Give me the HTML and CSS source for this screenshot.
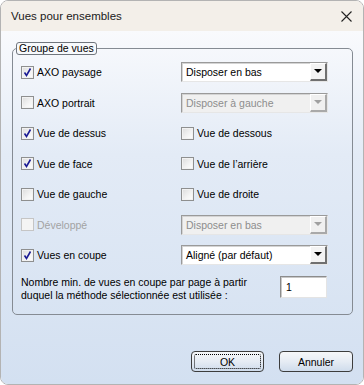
FILE: index.html
```html
<!DOCTYPE html>
<html lang="fr">
<head>
    <meta charset="UTF-8">
    <title>Vues pour ensembles</title>
    <link rel="stylesheet" href="styles.css">
</head>
<body>
    <div class="window">
        <div class="titlebar">
            <span class="title">Vues pour ensembles</span>
            <svg class="close" width="11" height="11" viewBox="0 0 11 11">
                <path d="M0.5 0.5 L10.5 10.5 M10.5 0.5 L0.5 10.5" stroke="#222" stroke-width="1.1" fill="none"/>
            </svg>
        </div>
        <div class="content">
            <fieldset class="group">
                <legend>Groupe de vues</legend>
                <div class="grid">
                    <label class="check"><span class="box"><svg class="tick" viewBox="0 0 11 11"><path d="M2.5 5.5 L4.5 8.5 L8.5 1.5"/></svg></span>AXO paysage</label>
                    <div class="select"><span class="value">Disposer en bas</span><span class="arrow"></span></div>

                    <label class="check"><span class="box"></span>AXO portrait</label>
                    <div class="select disabled"><span class="value">Disposer à gauche</span><span class="arrow"></span></div>

                    <label class="check"><span class="box"><svg class="tick" viewBox="0 0 11 11"><path d="M2.5 5.5 L4.5 8.5 L8.5 1.5"/></svg></span>Vue de dessus</label>
                    <label class="check"><span class="box"></span>Vue de dessous</label>

                    <label class="check"><span class="box"><svg class="tick" viewBox="0 0 11 11"><path d="M2.5 5.5 L4.5 8.5 L8.5 1.5"/></svg></span>Vue de face</label>
                    <label class="check"><span class="box"></span>Vue de l’arrière</label>

                    <label class="check"><span class="box"></span>Vue de gauche</label>
                    <label class="check"><span class="box"></span>Vue de droite</label>

                    <label class="check disabled"><span class="box"></span>Développé</label>
                    <div class="select disabled"><span class="value">Disposer en bas</span><span class="arrow"></span></div>

                    <label class="check"><span class="box"><svg class="tick" viewBox="0 0 11 11"><path d="M2.5 5.5 L4.5 8.5 L8.5 1.5"/></svg></span>Vues en coupe</label>
                    <div class="select"><span class="value">Aligné (par défaut)</span><span class="arrow"></span></div>
                </div>
                <div class="minrow">
                    <p>Nombre min. de vues en coupe par page à partir<br>duquel la méthode sélectionnée est utilisée :</p>
                    <div class="input">1</div>
                </div>
            </fieldset>
            <div class="buttons">
                <button class="btn default"><span>OK</span></button>
                <button class="btn"><span>Annuler</span></button>
            </div>
        </div>
    </div>
</body>
</html>
```

FILE: styles.css
```css
html, body {
    margin: 0;
    padding: 0;
}

body {
    width: 364px;
    height: 385px;
    background: #ffffff;
    font-family: "Liberation Sans", Arial, sans-serif;
    font-size: 10.5px;
    color: #000;
}

.window {
    box-sizing: border-box;
    width: 364px;
    height: 385px;
    border: 1px solid #b3b3b3;
    border-radius: 8px;
    overflow: hidden;
    display: flex;
    flex-direction: column;
}

.titlebar {
    height: 30px;
    flex: none;
    background: #f3efe9;
    display: flex;
    align-items: center;
    justify-content: space-between;
    padding: 0 10px 0 10px;
}

.title {
    font-size: 11.5px;
    color: #1a1a1a;
}

.close {
    margin-right: 1px;
}

.content {
    flex: 1;
    display: flex;
    flex-direction: column;
    background: linear-gradient(to bottom, #f9fafd 0%, #e3ebf6 35%, #d3e0f1 100%);
    padding: 0 10px 12px 11px;
}

.group {
    margin: 11px 0 0 0;
    padding: 0 0 13px 8px;
    border: 1px solid #858b93;
    border-radius: 5px;
}

.group legend {
    margin-left: -5px;
    padding: 0 2px;
    border: 1px solid #6f757d;
    border-radius: 3px;
    line-height: 11px;
    font-size: 10.5px;
    background: #f7f9fc;
}

.grid {
    margin-top: 7px;
    display: grid;
    grid-template-columns: 160px 147px;
    grid-auto-rows: 20px;
    row-gap: 10.5px;
}

.check {
    display: flex;
    align-items: center;
    gap: 3px;
    white-space: nowrap;
}

.check.disabled {
    color: #a3a3a3;
}

.box {
    box-sizing: border-box;
    width: 13px;
    height: 13px;
    border: 1px solid #8e8f8f;
    background: linear-gradient(135deg, #dcdcdc 0%, #f4f4f4 60%, #ffffff 100%);
    box-shadow: inset 0 0 0 1px #f2f2f2;
    display: flex;
}

.tick {
    width: 11px;
    height: 11px;
    fill: none;
    stroke: #1c1c94;
    stroke-width: 1.6;
}

.check.disabled .box {
    border-color: #c5c5c5;
    background: #f4f4f4;
    box-shadow: none;
}

.select {
    box-sizing: border-box;
    height: 20px;
    display: flex;
    align-items: center;
    background: #fff;
    border: 1px solid;
    border-color: #9a9a9a #e6e6e6 #e6e6e6 #9a9a9a;
    box-shadow: inset 1px 1px 0 #d4d4d4;
    padding-left: 4px;
}

.select .value {
    flex: 1;
    white-space: nowrap;
}

.select .arrow {
    position: relative;
    box-sizing: border-box;
    width: 17px;
    height: 18px;
    background: #f3f3f3;
    border: solid;
    border-width: 1px 2px 2px 1px;
    border-color: #ffffff #707070 #707070 #ffffff;
}

.select .arrow::after {
    content: '';
    position: absolute;
    left: 3px;
    top: 5px;
    border-style: solid;
    border-width: 4px 4px 0 4px;
    border-color: #000 transparent transparent transparent;
}

.select.disabled {
    background: #f0f0f0;
    color: #8d8d8d;
}

.select.disabled .arrow {
    border-color: #ffffff #a9a9a9 #a9a9a9 #ffffff;
    background: #f0f0f0;
}

.select.disabled .arrow::after {
    border-top-color: #a0a0a0;
}

.minrow {
    margin-top: 11px;
    display: flex;
    align-items: flex-start;
}

.minrow p {
    margin: 0;
    width: 259px;
    line-height: 12.5px;
}

.input {
    box-sizing: border-box;
    width: 47px;
    height: 22px;
    background: #fff;
    border: 1px solid;
    border-color: #8c8c8c #e4e4e4 #e4e4e4 #8c8c8c;
    box-shadow: inset 1px 1px 0 #c8c8c8;
    padding: 4px 0 0 5px;
}

.buttons {
    margin-top: auto;
    display: flex;
    justify-content: flex-end;
    gap: 15px;
}

.btn {
    box-sizing: border-box;
    width: 74px;
    height: 21px;
    padding: 2px;
    border: 1px solid #3d3d3d;
    border-radius: 4px;
    background: linear-gradient(to bottom, #f6f7f9 0%, #e6ecf4 50%, #cfdcec 100%);
    font-family: "Liberation Sans", Arial, sans-serif;
    font-size: 10.5px;
    color: #000;
}

.btn.default {
    width: 73px;
}

.btn span {
    display: flex;
    align-items: center;
    justify-content: center;
    height: 100%;
    box-sizing: border-box;
}

.btn.default span {
    border: 1px dotted #000;
    border-radius: 2px;
}
```
